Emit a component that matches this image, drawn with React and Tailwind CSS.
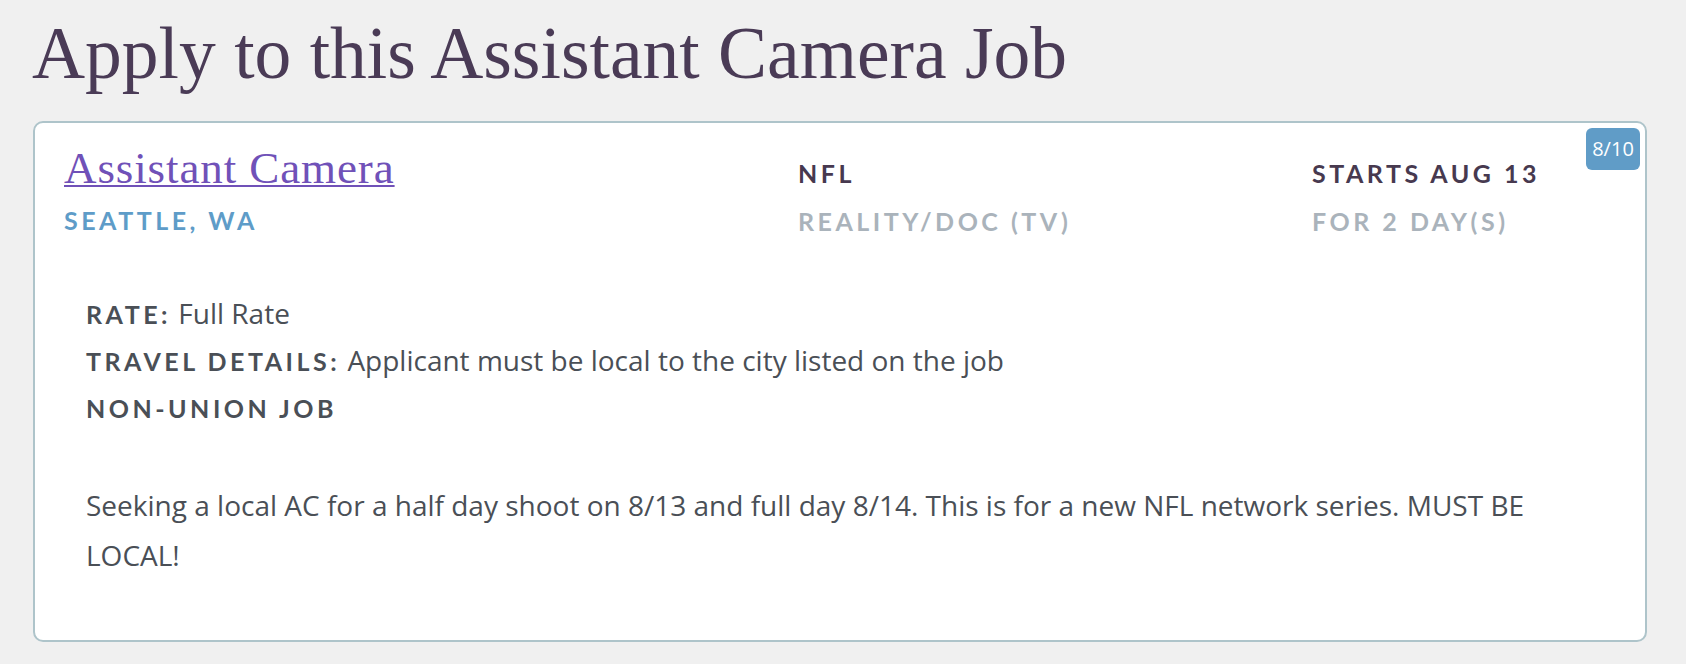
import React from 'react'

const job = {
  title: 'Assistant Camera',
  location: 'Seattle, WA',
  client: 'NFL',
  kind: 'Reality/Doc (TV)',
  starts: 'Starts Aug 13',
  length: 'For 2 Day(s)',
  rate: 'Full Rate',
  travel: 'Applicant must be local to the city listed on the job',
  description:
    'Seeking a local AC for a half day shoot on 8/13 and full day 8/14. This is for a new NFL network series. MUST BE LOCAL!',
}

const serif = "font-['Liberation_Serif','Times_New_Roman',serif]"
const caps = "font-['Lato','Liberation_Sans',sans-serif] font-bold uppercase text-[25px] tracking-[0.14em]"

function Detail({ label, children }) {
  return (
    <div>
      <span className={caps + ' text-[#4a4f56]'}>{label}</span>
      {children && <span> {children}</span>}
    </div>
  )
}

export default function App() {
  return (
    <div className="min-h-screen bg-[#f0f0f0] pl-[33px] pr-[39px] pt-[17px] pb-[25px]">
      <h1 className={serif + ' text-[73.5px] leading-none text-[#4a3b56] -ml-px'}>
        Apply to this Assistant Camera Job
      </h1>

      <div className="relative mt-[30px] rounded-[10px] border-2 border-[#aec4ca] bg-white pl-[29px] pr-[28px] pt-[18px] pb-[60px]">
        <span className="absolute top-[5px] right-[5px] flex h-[42px] w-[54px] items-center justify-center rounded-[6px] bg-[#609cc7] font-['Open_Sans',sans-serif] text-[20px] text-white">
          8/10
        </span>

        <div className="grid grid-cols-[734px_514px_1fr] items-baseline">
          <div>
            <div className={serif + ' text-[45px] leading-[55px] tracking-[0.02em]'}>
              <a href="#" className="text-[#7051b8] underline decoration-2 underline-offset-2">
                {job.title}
              </a>
            </div>
            <div className={caps + ' leading-[48px] text-[#5e9cc8]'}>{job.location}</div>
          </div>
          <div>
            <div className={caps + ' leading-[48px] text-[#47394f]'}>{job.client}</div>
            <div className={caps + ' leading-[48px] text-[#aab3bb]'}>{job.kind}</div>
          </div>
          <div>
            <div className={caps + ' leading-[48px] text-[#47394f]'}>{job.starts}</div>
            <div className={caps + ' leading-[48px] text-[#aab3bb]'}>{job.length}</div>
          </div>
        </div>

        <div className="pl-[22px] font-['Open_Sans',sans-serif] text-[28px] text-[#4a4f56]">
          <div className="mt-[45px] leading-[46px]">
            <Detail label="Rate:">{job.rate}</Detail>
            <Detail label="Travel Details:">{job.travel}</Detail>
            <Detail label="Non-Union Job" />
          </div>
          <p className="mt-[49px] leading-[50px]">{job.description}</p>
        </div>
      </div>
    </div>
  )
}
